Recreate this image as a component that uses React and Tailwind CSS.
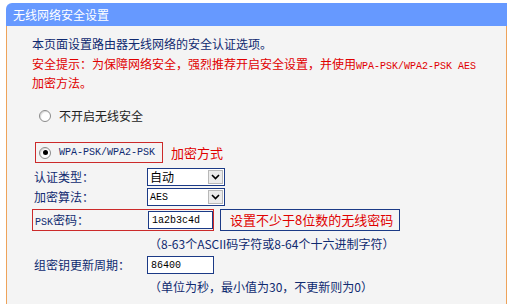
import React from "react";

const Radio = ({ checked }) => (
  <span className="inline-flex items-center justify-center w-[12px] h-[12px] rounded-full border border-[#8a8a8a] bg-white shadow-[inset_1px_1px_1px_rgba(0,0,0,0.15)]">
    {checked && <span className="w-[5px] h-[5px] rounded-full bg-black" />}
  </span>
);

const Select = ({ value, mono }) => (
  <div className="flex items-center w-[78px] h-[18px] border border-[#1b3a86] bg-white">
    <span
      className={
        "flex-1 pl-[2px] text-black " +
        (mono ? "font-['Liberation_Mono'] text-[10px]" : "text-[12px]")
      }
    >
      {value}
    </span>
    <span className="flex items-center justify-center w-[15px] h-[14px] mr-[1px] bg-[#ececec] border border-[#b8b8b8]">
      <svg width="9" height="6" viewBox="0 0 9 6">
        <path d="M1 1 L4.5 4.5 L8 1" fill="none" stroke="#000" strokeWidth="1.6" />
      </svg>
    </span>
  </div>
);

const Field = ({ value, w }) => (
  <div
    className={
      "flex items-center h-[18px] border border-[#1b3a86] bg-white pl-[3px] font-['Liberation_Mono'] text-[10px] text-black " +
      w
    }
  >
    {value}
  </div>
);

export default function App() {
  return (
    <div
      className="w-[512px] h-[304px] bg-white pt-[3px] overflow-hidden text-[12px] text-[#0f2a70]"
      style={{ fontFamily: '"Noto Sans CJK SC", "Liberation Sans", sans-serif' }}
    >
      <div className="ml-[6px] w-[501px] h-[301px] flex flex-col">
        {/* Header */}
        <div className="h-[23px] bg-[#6699ff] rounded-tl-[6px] pl-[7px] flex items-center text-white text-[12px]">
          无线网络安全设置
        </div>

        {/* Body */}
        <div className="flex-1 bg-[#f4f4f4] border-l border-r border-[#eea35a] pl-[25px]">
          <p className="mt-[9px] leading-[18px]">本页面设置路由器无线网络的安全认证选项。</p>
          <p className="mt-[3px] leading-[16px] text-[#e00000]">
            安全提示：为保障网络安全，强烈推荐开启安全设置，并使用
            <span className="font-['Liberation_Mono'] text-[10px]">WPA-PSK/WPA2-PSK AES</span>
            <br />
            加密方法。
          </p>

          {/* No security */}
          <div className="mt-[15px] h-[20px] flex items-center pl-[7px] gap-[8px] text-[#222]">
            <Radio />
            <span>不开启无线安全</span>
          </div>

          {/* WPA */}
          <div className="mt-[16px] flex items-center">
            <div className="h-[21px] w-[128px] ml-[3px] border border-[#cc2a2a] flex items-center pl-[3px] gap-[8px]">
              <Radio checked />
              <span className="font-['Liberation_Mono'] text-[10px]">WPA-PSK/WPA2-PSK</span>
            </div>
            <span className="ml-[8px] text-[13px] text-[#e00000]">加密方式</span>
          </div>

          <div className="mt-[4px] h-[20px] flex items-center">
            <span className="w-[115px] pl-[2px]">认证类型：</span>
            <Select value="自动" />
          </div>
          <div className="h-[20px] flex items-center">
            <span className="w-[115px] pl-[2px]">加密算法：</span>
            <Select value="AES" mono />
          </div>

          {/* PSK */}
          <div className="mt-[2px] flex items-center">
            <div className="h-[22px] w-[182px] border border-[#cc2a2a] flex items-center">
              <span className="w-[115px] pl-[2px]">
                <span className="font-['Liberation_Mono'] text-[10px]">PSK</span>密码：
              </span>
              <Field value="1a2b3c4d" w="w-[65px]" />
            </div>
            <div className="ml-[6px] h-[22px] w-[180px] border border-[#1b3a86] flex items-center pl-[9px] text-[13px] text-[#e00000]">
              设置不少于8位数的无线密码
            </div>
          </div>

          <p className="mt-[4px] leading-[18px] pl-[117px]">（8-63个ASCII码字符或8-64个十六进制字符）</p>

          <div className="mt-[2px] h-[20px] flex items-center">
            <span className="w-[115px] pl-[2px]">组密钥更新周期：</span>
            <Field value="86400" w="w-[67px]" />
          </div>

          <p className="mt-[3px] leading-[18px] pl-[117px]">（单位为秒，最小值为30，不更新则为0）</p>
        </div>
      </div>
    </div>
  );
}
